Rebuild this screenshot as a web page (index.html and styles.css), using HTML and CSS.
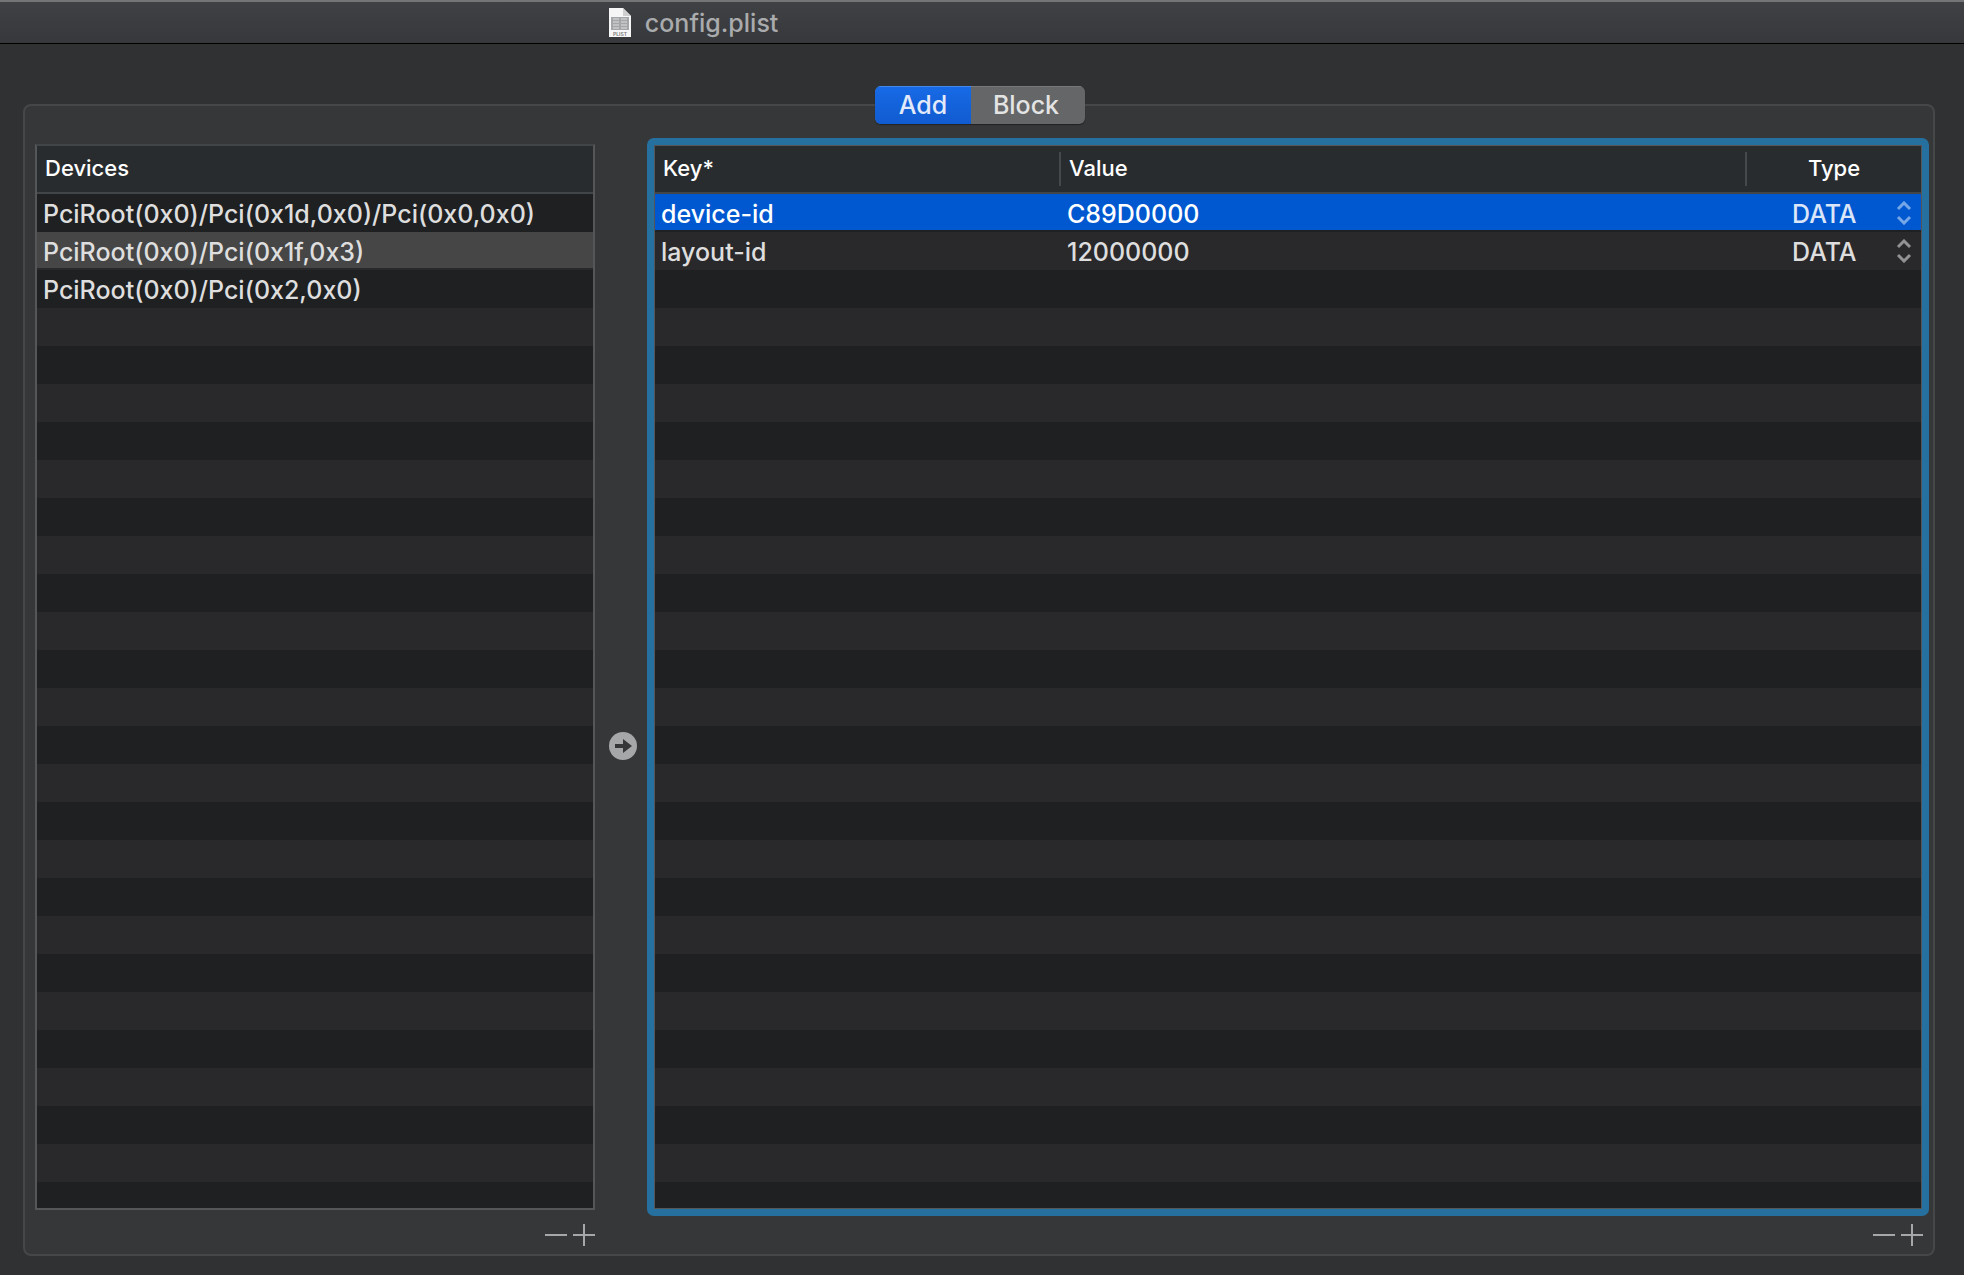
FILE: index.html
```html
<!DOCTYPE html>
<html lang="en">
<head>
<meta charset="utf-8">
<title>config.plist</title>
<link rel="stylesheet" href="styles.css">
</head>
<body>
<header class="titlebar">
  <svg class="doc-icon" width="22" height="30" viewBox="0 0 22 30" aria-hidden="true">
    <path d="M0 0h14l8 8v21H0z" fill="#f6f6f6"/>
    <path d="M14 0l8 8h-8z" fill="#cfcfcf"/>
    <path d="M2 9h18v13H2z" fill="#a4a6a7"/>
    <path d="M4 11h6M12 11h6M4 14h6M12 14h6M4 17h6M12 17h6M4 20h6M12 20h6" stroke="#dedede" stroke-width="1"/>
    <text x="11" y="28" text-anchor="middle" font-family="Inter, sans-serif" font-size="5" font-weight="600" fill="#777">PLIST</text>
  </svg>
  <h1 class="title">config.plist</h1>
</header>
<main class="content">
  <div class="tabs">
    <button class="tab tab-active" type="button" aria-pressed="true">Add</button>
    <button class="tab" type="button" aria-pressed="false">Block</button>
  </div>
  <section class="box">
    <div class="list devices">
      <table>
        <thead><tr><th>Devices</th></tr></thead>
        <tbody>
          <tr><td>PciRoot(0x0)/Pci(0x1d,0x0)/Pci(0x0,0x0)</td></tr>
          <tr class="current"><td>PciRoot(0x0)/Pci(0x1f,0x3)</td></tr>
          <tr><td>PciRoot(0x0)/Pci(0x2,0x0)</td></tr>
        </tbody>
      </table>
    </div>
    <div class="between">
      <button class="icon-button" type="button" aria-label="Show properties">
        <svg width="28" height="28" viewBox="0 0 28 28"><circle cx="14" cy="14" r="14" fill="#a6a7a8"/><path d="M6 12h8V7l9 7-9 7v-5H6z" fill="#353637"/></svg>
      </button>
    </div>
    <div class="list properties">
      <table>
        <colgroup><col class="col-key"><col><col class="col-type"></colgroup>
        <thead><tr><th class="divided">Key*</th><th class="divided">Value</th><th class="type-head">Type</th></tr></thead>
        <tbody>
          <tr class="selected">
            <td>device-id</td><td>C89D0000</td>
            <td class="type-cell"><select class="type-select" aria-label="Type of device-id"><option>DATA</option></select><svg class="chevrons" width="16" height="24" viewBox="0 0 16 24"><path d="M2 8l6-6 6 6M2 16l6 6 6-6" fill="none" stroke="currentColor" stroke-width="3"/></svg></td>
          </tr>
          <tr>
            <td>layout-id</td><td>12000000</td>
            <td class="type-cell"><select class="type-select" aria-label="Type of layout-id"><option>DATA</option></select><svg class="chevrons" width="16" height="24" viewBox="0 0 16 24"><path d="M2 8l6-6 6 6M2 16l6 6 6-6" fill="none" stroke="currentColor" stroke-width="3"/></svg></td>
          </tr>
        </tbody>
      </table>
    </div>
    <div class="actions">
      <button class="icon-button" type="button" aria-label="Remove device"><svg width="22" height="22" viewBox="0 0 22 22"><path d="M0 11h22" stroke="#a6a7a8" stroke-width="2"/></svg></button>
      <button class="icon-button" type="button" aria-label="Add device"><svg width="22" height="22" viewBox="0 0 22 22"><path d="M0 11h22M11 0v22" stroke="#a6a7a8" stroke-width="2"/></svg></button>
    </div>
    <div class="actions actions-right">
      <button class="icon-button" type="button" aria-label="Remove property"><svg width="22" height="22" viewBox="0 0 22 22"><path d="M0 11h22" stroke="#a6a7a8" stroke-width="2"/></svg></button>
      <button class="icon-button" type="button" aria-label="Add property"><svg width="22" height="22" viewBox="0 0 22 22"><path d="M0 11h22M11 0v22" stroke="#a6a7a8" stroke-width="2"/></svg></button>
    </div>
  </section>
</main>
</body>
</html>
```

FILE: styles.css
```css
* { box-sizing: border-box; }

body {
  margin: 0;
  min-height: 100vh;
  display: flex;
  flex-direction: column;
  background: #303133;
  color: #dedede;
  font: 500 25px/36px Inter, "Liberation Sans", sans-serif;
}

button, select { font: inherit; color: inherit; border: 0; margin: 0; padding: 0; background: none; }

.titlebar {
  display: flex;
  align-items: center;
  gap: 14px;
  height: 44px;
  padding-left: 31%;
  border-top: 2px solid #737577;
  border-bottom: 1px solid #000;
  background: linear-gradient(#404144, #37383b);
}
.title { margin: 0; font-size: 25px; font-weight: 500; line-height: 36px; color: #a9abad; }
.doc-icon { display: block; }

.content {
  flex: 1;
  display: flex;
  flex-direction: column;
  padding: 42px 29px 19px 23px;
}

.tabs {
  position: relative;
  z-index: 1;
  align-self: center;
  display: flex;
  height: 38px;
  margin-left: 2px;
  border-radius: 6px;
  overflow: hidden;
  background: #656668;
  box-shadow: 0 1px 1px #222;
}
.tab { width: 114px; padding-right: 4px; color: #e4e4e4; box-shadow: inset 0 1px #77787a; }
.tab-active {
  width: 96px;
  padding: 0;
  color: #e3ebfa;
  background: linear-gradient(#176ae6, #115bd0);
  box-shadow: inset 0 1px #4288ee;
}

.box {
  flex: 1;
  display: grid;
  grid-template-columns: minmax(0, 56fr) 58px minmax(0, 127fr);
  grid-template-rows: 1fr auto;
  row-gap: 14px;
  margin-top: -20px;
  padding: 38px 10px 8px;
  border: 2px solid #464749;
  border-radius: 8px;
  background: #363739;
}

.list {
  position: relative;
  border: 2px solid #555658;
  background: repeating-linear-gradient(#1e2022 0 38px, #29292b 38px 76px) 0 48px;
}
.list table { width: 100%; border-spacing: 0; table-layout: fixed; }
.devices { border-top-color: #414547; }

.properties::before {
  content: "";
  position: absolute;
  inset: -8px;
  border: 7px solid #2670a0;
  border-radius: 7px;
  pointer-events: none;
}

th {
  height: 48px;
  padding: 0 8px 2px;
  border-bottom: 2px solid #434648;
  background: #282c2f;
  color: #fff;
  font-size: 22px;
  font-weight: 500;
  text-align: left;
}
.divided {
  background: #282c2f linear-gradient(#46494c, #46494c) right center / 2px 34px no-repeat;
}
.type-head { text-align: center; }

td { height: 38px; padding: 4px 6px 0; line-height: 32px; border-bottom: 2px solid transparent; white-space: nowrap; background-clip: padding-box; }
.current td { background-color: #464646; }
.selected td { background-color: #0058d0; color: #fff; }

.col-key { width: 406px; }
.col-type { width: 174px; }

.type-cell { position: relative; }
.type-select {
  display: block;
  width: 100%;
  height: 32px;
  padding-left: 39px;
  appearance: none;
}
.selected .type-select { color: #dbe6f8; }
.chevrons { position: absolute; right: 9px; top: 7px; color: #929293; pointer-events: none; }
.selected .chevrons { color: #75a6e8; }

.between { display: flex; align-items: center; justify-content: center; padding: 138px 2px 0 0; }
.icon-button { display: block; }
.icon-button svg { display: block; }
.actions { grid-column: 1; display: flex; justify-content: flex-end; gap: 6px; }
.actions-right { grid-column: 3; }
```
